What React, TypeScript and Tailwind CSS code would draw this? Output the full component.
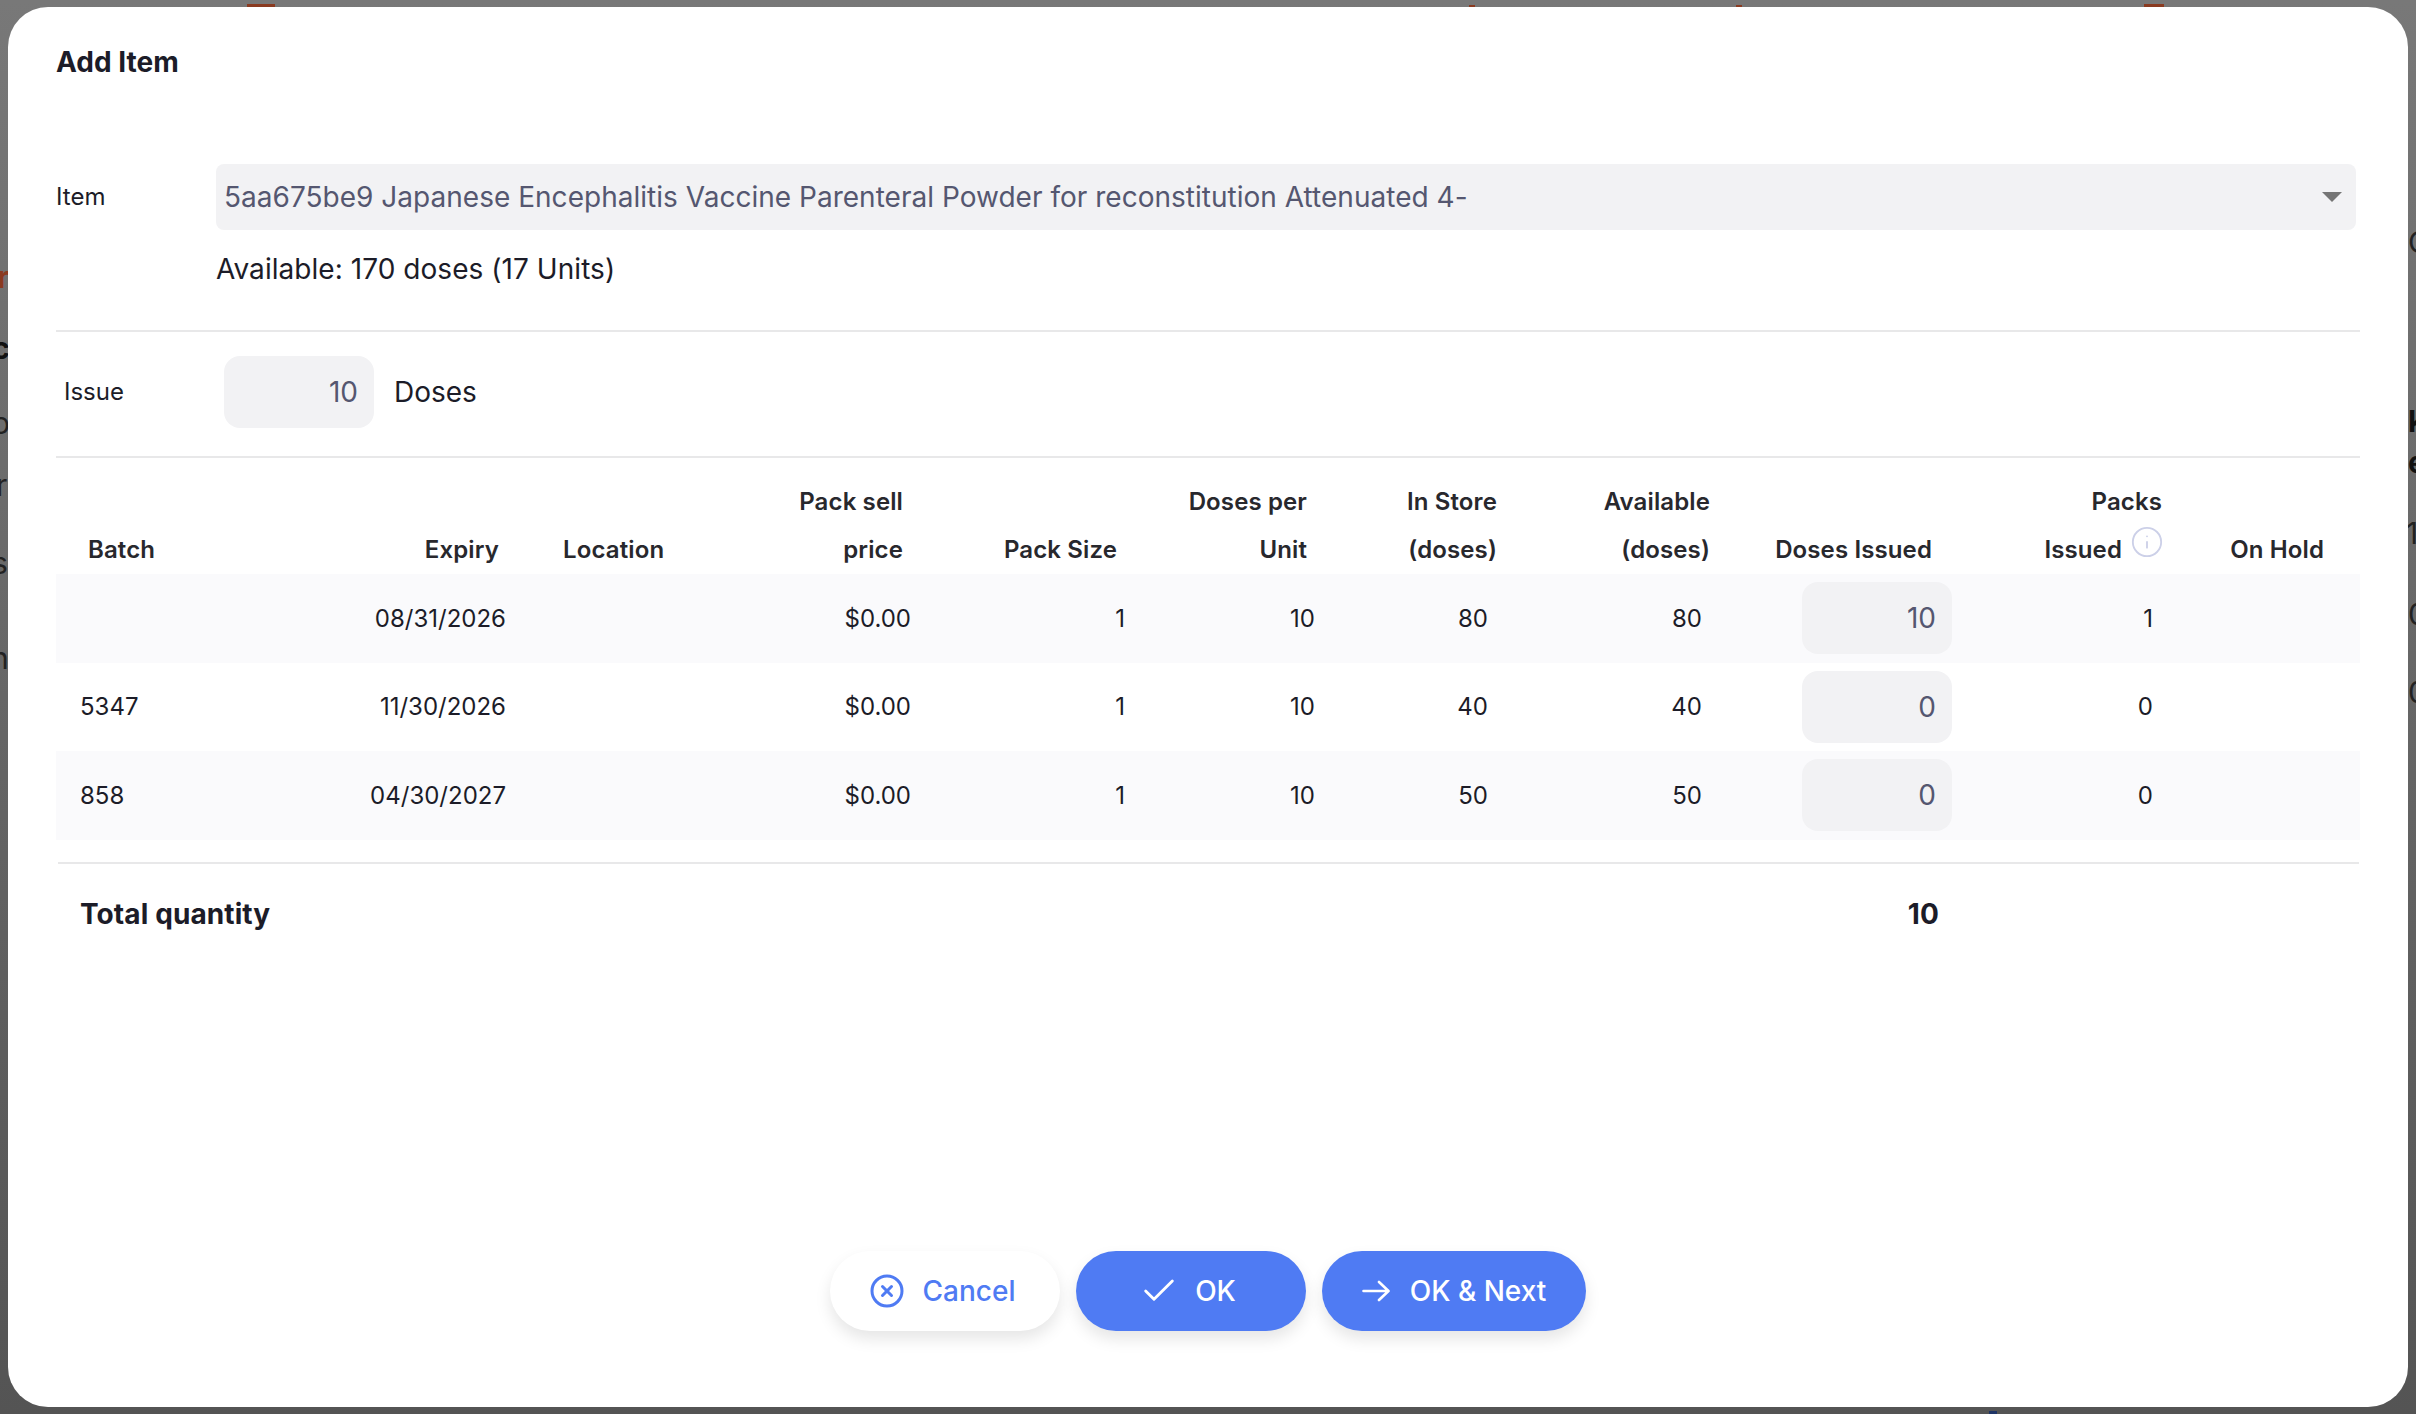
import { Check, CircleX, Info } from "lucide-react";

type Row = {
  batch: string;
  expiry: string;
  inStore: string;
  issued: string;
  packs: string;
};

const rows: Row[] = [
  { batch: "", expiry: "08/31/2026", inStore: "80", issued: "10", packs: "1" },
  { batch: "5347", expiry: "11/30/2026", inStore: "40", issued: "0", packs: "0" },
  { batch: "858", expiry: "04/30/2027", inStore: "50", issued: "0", packs: "0" },
];

// bits of the page behind the scrim that show around the dialog
const behind = [
  { text: "r", className: "top-[259px] left-[-3px] font-bold text-[#8a3a20]" },
  { text: "c", className: "top-[330px] left-[-8px] font-bold text-[#111]" },
  { text: "o", className: "top-[405px] left-[-8px] text-[#222]" },
  { text: "r", className: "top-[467px] left-[-4px] text-[#222]" },
  { text: "s", className: "top-[545px] left-[-8px] text-[#222]" },
  { text: "n", className: "top-[640px] left-[-9px] text-[#222]" },
  { text: "O", className: "top-[224px] left-[2408px] text-[#222]" },
  { text: "k", className: "top-[403px] left-[2408px] font-bold text-[#111]" },
  { text: "e", className: "top-[444px] left-[2408px] font-bold text-[#111]" },
  { text: "1", className: "top-[515px] left-[2406px] text-[#222]" },
  { text: "0", className: "top-[596px] left-[2408px] text-[#222]" },
  { text: "0", className: "top-[674px] left-[2408px] text-[#222]" },
];

const th = "pr-[31px] text-right align-bottom font-semibold";
const td = "pt-px pr-[23px] text-right";
const inputClass =
  "h-[72px] w-[150px] rounded-2xl bg-[#f2f2f4] px-4 text-right text-[28px] text-[#555770] outline-none";
const primary =
  "flex h-20 items-center justify-center rounded-full bg-[#4f7bf3] text-white shadow-[0_8px_16px_rgba(0,0,0,0.1)]";

export default function App() {
  return (
    <div className="relative h-screen overflow-hidden bg-gradient-to-b from-[#787878] to-[#545454] px-2 pt-[7px] font-['Inter',sans-serif] text-[#1c1c28]">
      {behind.map((b) => (
        <span key={b.className} className={`absolute text-[30px] leading-9 ${b.className}`}>
          {b.text}
        </span>
      ))}
      <span className="absolute top-1 left-[247px] h-[3px] w-7 bg-[#8a3a20]" />
      <span className="absolute top-[5px] left-[1469px] h-0.5 w-1.5 bg-[#8a3a20]" />
      <span className="absolute top-[5px] left-[1736px] h-0.5 w-1.5 bg-[#8a3a20]" />
      <span className="absolute top-1 left-[2144px] h-[3px] w-5 bg-[#8a3a20]" />
      <span className="absolute bottom-0 left-[1989px] h-[3px] w-2 bg-[#1f3466]" />

      {/* Dialog */}
      <div className="relative flex h-[1400px] flex-col rounded-[40px] bg-white px-12 pt-[38px]">
        <h1 className="text-[28px] leading-[34px] font-bold">Add Item</h1>

        {/* Item select */}
        <div className="mt-[85px] mr-1 flex items-center">
          <label className="w-40 text-2xl">Item</label>
          <div className="flex h-[66px] flex-1 items-center justify-between rounded-lg bg-[#f2f2f4] pr-[14px] pl-2 text-[28px] tracking-[0.02px] text-[#555770]">
            <span>5aa675be9 Japanese Encephalitis Vaccine Parenteral Powder for reconstitution Attenuated 4-</span>
            <span className="h-0 w-0 border-x-10 border-t-10 border-x-transparent border-t-[#757575]" />
          </div>
        </div>
        <p className="mt-[22px] ml-40 text-[28px] leading-[34px] tracking-[0.05px]">Available: 170 doses (17 Units)</p>
        <div className="mt-[44px] h-0.5 bg-[#e8e8e9]" />

        {/* Issue quantity */}
        <div className="mt-6 flex items-center">
          <label className="w-[168px] pl-2 text-2xl">Issue</label>
          <input readOnly value="10" className={inputClass} />
          <span className="ml-5 text-[28px]">Doses</span>
        </div>
        <div className="mt-7 h-0.5 bg-[#e8e8e9]" />

        {/* Batch table */}
        <table className="mt-5 w-full table-fixed border-collapse text-2xl">
          <colgroup>
            <col className="w-[184px]" />
            <col className="w-[290px]" />
            <col className="w-[210px]" />
            <col className="w-[194px]" />
            <col className="w-[214px]" />
            <col className="w-[190px]" />
            <col className="w-[190px]" />
            <col className="w-[213px]" />
            <col className="w-[222px]" />
            <col className="w-[230px]" />
            <col />
          </colgroup>
          <thead className="leading-[48px] tracking-[0.12px] text-[#28282d]">
            <tr>
              <th className="pl-8 text-left align-bottom font-semibold">Batch</th>
              <th className={th}>Expiry</th>
              <th className="pl-[33px] text-left align-bottom font-semibold">Location</th>
              <th className={th}>
                Pack sell
                <br />
                price
              </th>
              <th className={th}>Pack Size</th>
              <th className={th}>
                Doses per
                <br />
                Unit
              </th>
              <th className={th}>
                In Store
                <br />
                (doses)
              </th>
              <th className={th}>
                Available
                <br />
                (doses)
              </th>
              <th className={th}>Doses Issued</th>
              <th className={th}>
                Packs
                <br />
                <span className="inline-flex items-start">
                  Issued
                  <Info className="mt-[-1px] mr-[-2px] ml-2 size-[34px] text-[#ccd0e8]" strokeWidth={1.3} />
                </span>
              </th>
              <th className="pr-[36px] text-right align-bottom font-semibold">On Hold</th>
            </tr>
          </thead>
          <tbody>
            {rows.map((row) => (
              <tr key={row.expiry} className="h-[88.5px] odd:bg-[#fafafc] even:bg-white">
                <td className="pt-px pl-6">{row.batch}</td>
                <td className="pt-px pr-6 text-right">{row.expiry}</td>
                <td />
                <td className={td}>$0.00</td>
                <td className={td}>1</td>
                <td className={td}>10</td>
                <td className="pt-px pr-10 text-right">{row.inStore}</td>
                <td className="pt-px pr-[39px] text-right">{row.inStore}</td>
                <td className="pr-[11px] text-right">
                  <input readOnly value={row.issued} className={inputClass} />
                </td>
                <td className="pt-px pr-10 text-right">{row.packs}</td>
                <td />
              </tr>
            ))}
          </tbody>
        </table>
        <div className="mt-[22px] mr-px ml-0.5 h-0.5 bg-[#e8e8e9]" />

        {/* Total */}
        <div className="mt-[33px] flex justify-between pr-[421px] pl-6 text-[28px] leading-[34px] font-bold tracking-[0.1px]">
          <span>Total quantity</span>
          <span>10</span>
        </div>

        {/* Actions */}
        <div className="mt-auto mb-[76px] flex justify-center gap-4 text-[28px] font-medium">
          <button className="flex h-20 w-[230px] items-center justify-center gap-[18px] rounded-full bg-white pr-1.5 text-[#4f7bf3] shadow-[0_8px_16px_rgba(0,0,0,0.1)]">
            <CircleX className="size-9" strokeWidth={2} />
            Cancel
          </button>
          <button className={`${primary} w-[230px] gap-4 pr-[7px]`}>
            <Check className="size-10" strokeWidth={1.7} />
            OK
          </button>
          <button className={`${primary} w-[264px] gap-5`}>
            <svg width="28" height="22" viewBox="0 0 28 22" fill="none" stroke="currentColor" strokeWidth="2.6" strokeLinecap="round" strokeLinejoin="round">
              <path d="M1.5 11H26M17 2l9.5 9L17 20" />
            </svg>
            OK &amp; Next
          </button>
        </div>
      </div>
    </div>
  );
}
